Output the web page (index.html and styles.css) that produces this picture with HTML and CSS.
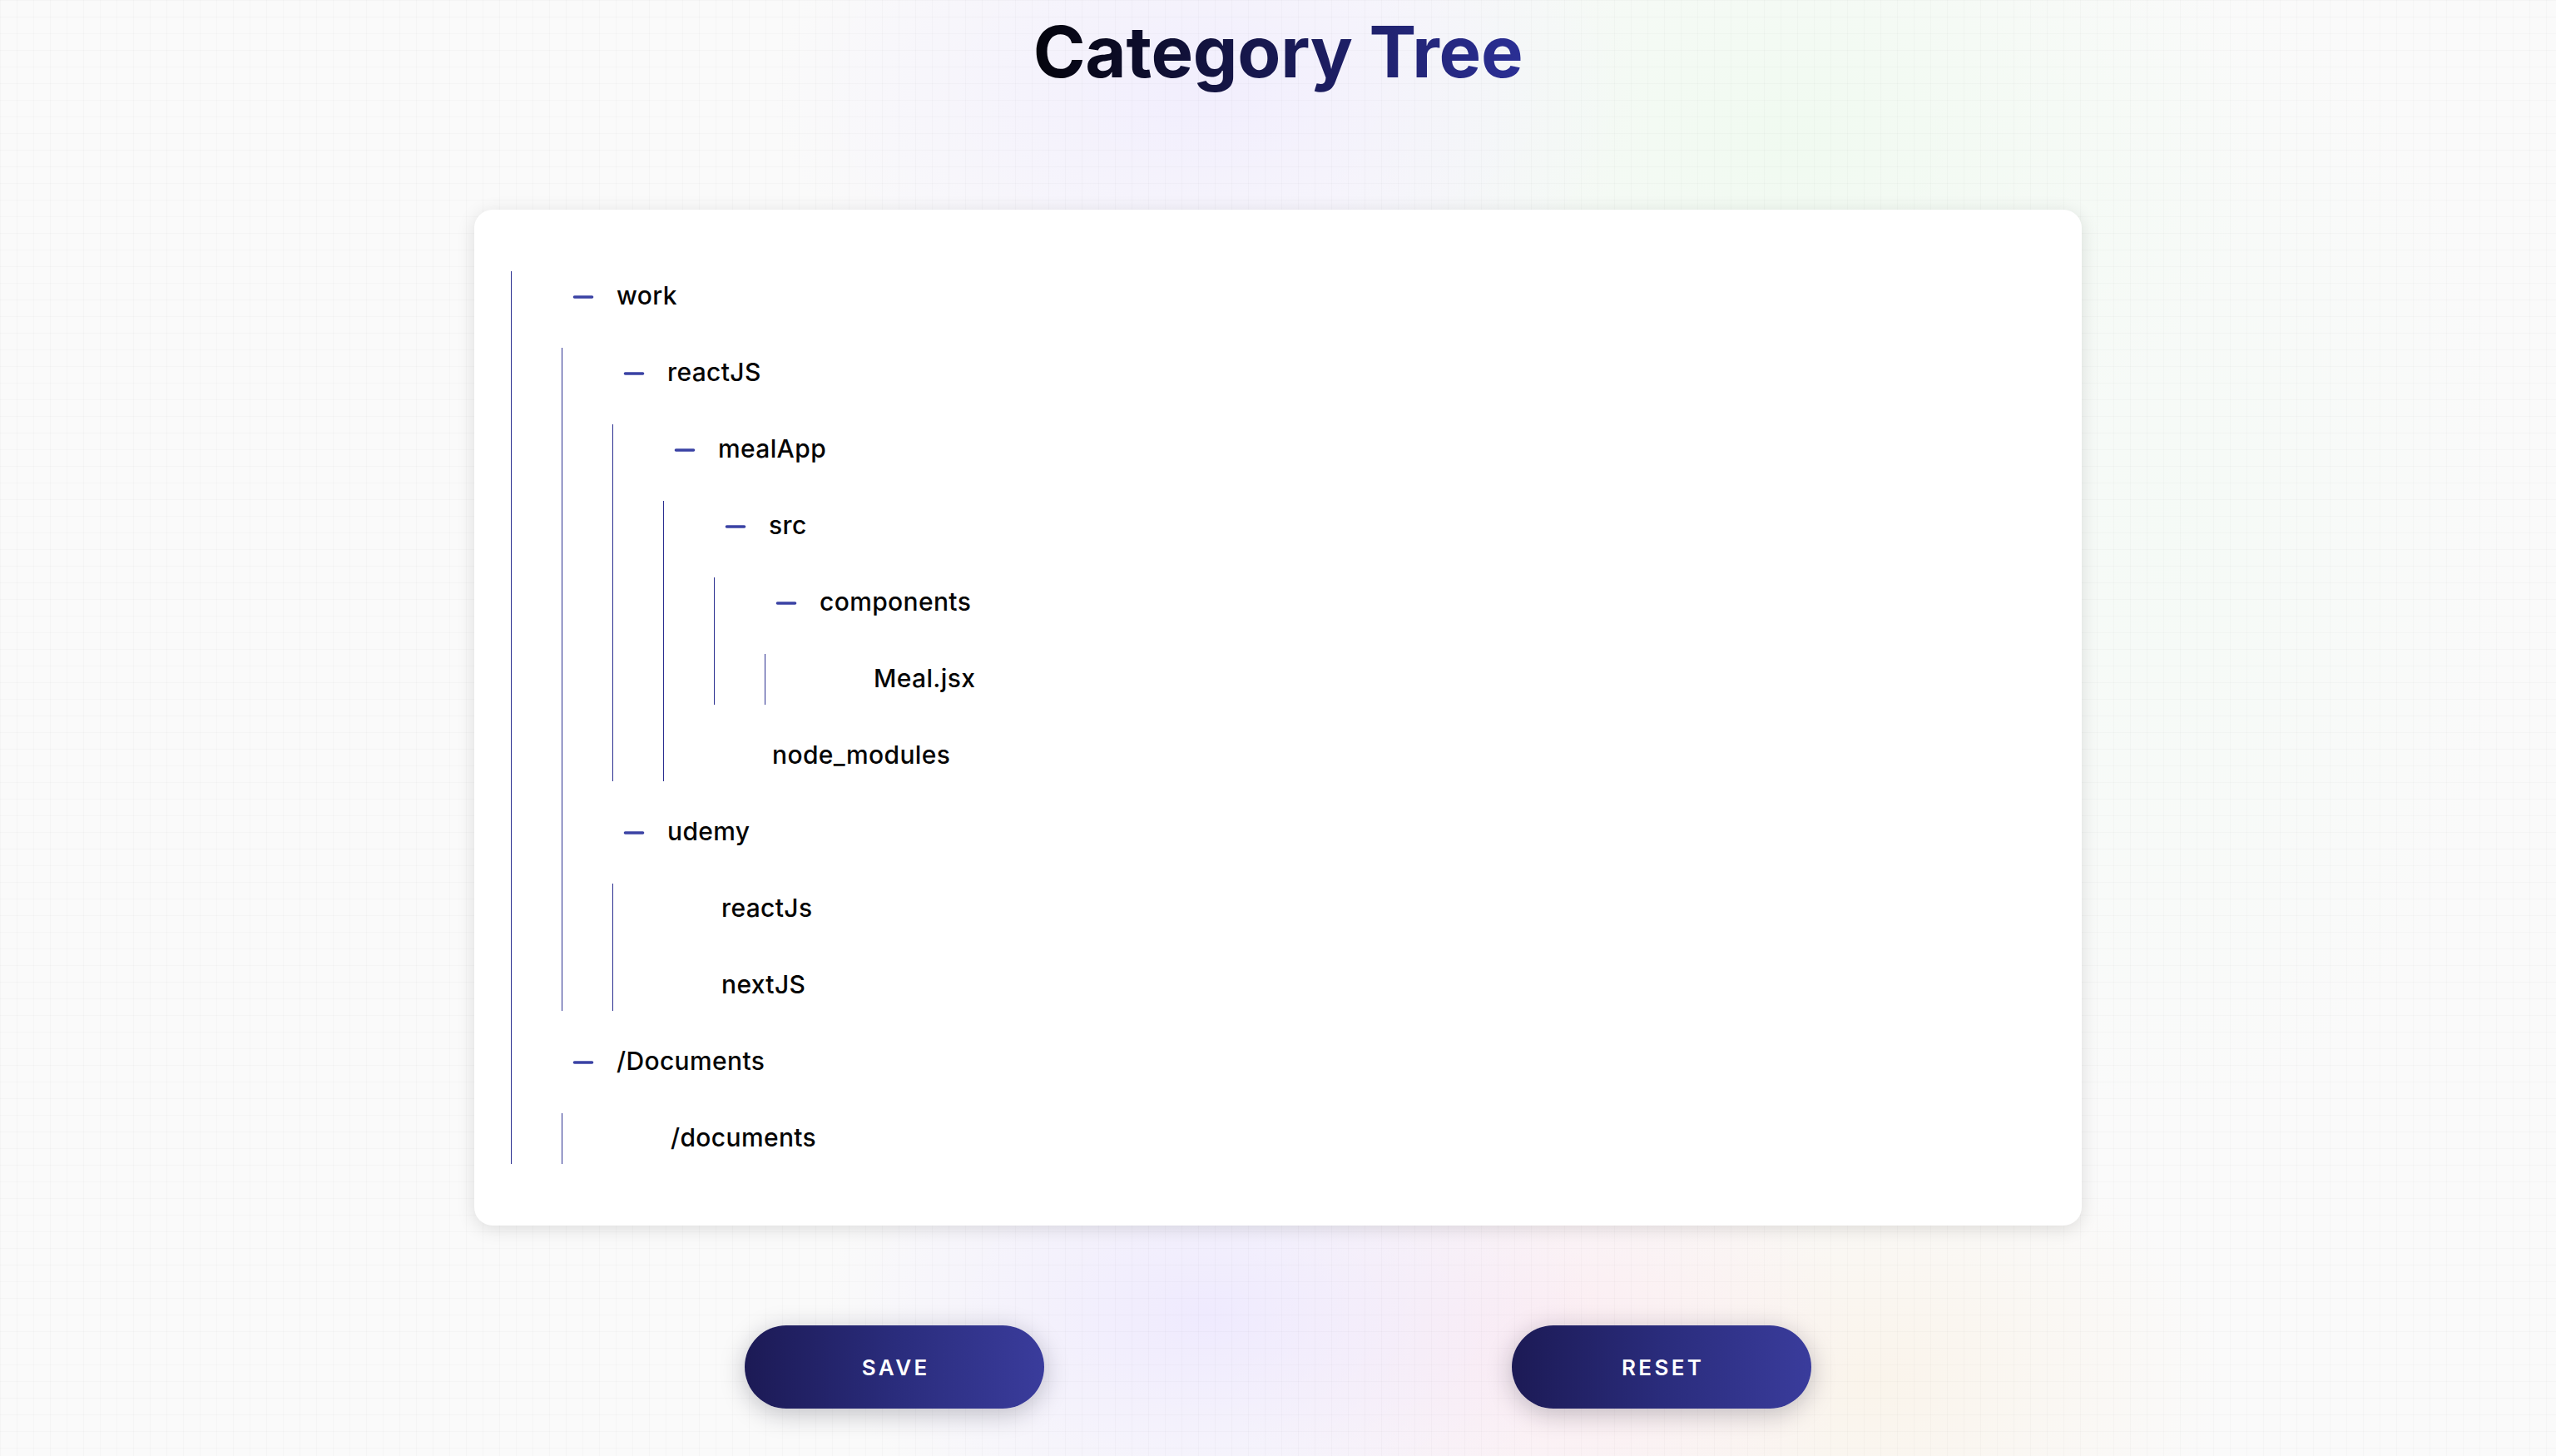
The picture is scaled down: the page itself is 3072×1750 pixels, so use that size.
FILE: index.html
```html
<!DOCTYPE html>
<html lang="en">
<head>
<meta charset="utf-8">
<title>Category Tree</title>
<link rel="stylesheet" href="styles.css">
</head>
<body>
<main class="page">
  <h1 class="title">Category Tree</h1>
  <section class="card">
    <ul class="tree">
      <li class="node">
        <div class="row"><span class="toggle"><svg viewBox="0 0 24 24"><path d="M5 12h14"/></svg></span><span class="label">work</span></div>
        <ul class="tree">
          <li class="node">
            <div class="row"><span class="toggle"><svg viewBox="0 0 24 24"><path d="M5 12h14"/></svg></span><span class="label">reactJS</span></div>
            <ul class="tree">
              <li class="node">
                <div class="row"><span class="toggle"><svg viewBox="0 0 24 24"><path d="M5 12h14"/></svg></span><span class="label">mealApp</span></div>
                <ul class="tree">
                  <li class="node">
                    <div class="row"><span class="toggle"><svg viewBox="0 0 24 24"><path d="M5 12h14"/></svg></span><span class="label">src</span></div>
                    <ul class="tree">
                      <li class="node">
                        <div class="row"><span class="toggle"><svg viewBox="0 0 24 24"><path d="M5 12h14"/></svg></span><span class="label">components</span></div>
                        <ul class="tree">
                          <li class="node">
                            <div class="row leaf"><span class="label">Meal.jsx</span></div>
                          </li>
                        </ul>
                      </li>
                    </ul>
                  </li>
                  <li class="node">
                    <div class="row leaf"><span class="label">node_modules</span></div>
                  </li>
                </ul>
              </li>
            </ul>
          </li>
          <li class="node">
            <div class="row"><span class="toggle"><svg viewBox="0 0 24 24"><path d="M5 12h14"/></svg></span><span class="label">udemy</span></div>
            <ul class="tree">
              <li class="node">
                <div class="row leaf"><span class="label">reactJs</span></div>
              </li>
              <li class="node">
                <div class="row leaf"><span class="label">nextJS</span></div>
              </li>
            </ul>
          </li>
        </ul>
      </li>
      <li class="node">
        <div class="row"><span class="toggle"><svg viewBox="0 0 24 24"><path d="M5 12h14"/></svg></span><span class="label">/Documents</span></div>
        <ul class="tree">
          <li class="node">
            <div class="row leaf"><span class="label">/documents</span></div>
          </li>
        </ul>
      </li>
    </ul>
  </section>
  <div class="actions">
    <button class="btn" type="button">SAVE</button>
    <button class="btn" type="button">RESET</button>
  </div>
</main>
</body>
</html>
```

FILE: styles.css
```css
html, body {
  margin: 0;
  padding: 0;
}

body {
  min-height: 100vh;
  font-family: Inter, "Noto Sans", "Liberation Sans", sans-serif;
  color: #000;
  background-color: #fafafa;
  background-image:
    linear-gradient(rgba(0, 0, 0, 0.02) 1px, transparent 1px),
    linear-gradient(90deg, rgba(0, 0, 0, 0.02) 1px, transparent 1px),
    radial-gradient(ellipse 520px 320px at 1450px 110px, rgba(238, 233, 255, 0.7), rgba(238, 233, 255, 0) 100%),
    radial-gradient(ellipse 560px 420px at 2150px 170px, rgba(232, 250, 232, 0.55), rgba(232, 250, 232, 0) 100%),
    radial-gradient(ellipse 420px 700px at 2600px 650px, rgba(240, 250, 242, 0.5), rgba(240, 250, 242, 0) 100%),
    radial-gradient(ellipse 460px 300px at 1450px 1580px, rgba(236, 230, 255, 0.8), rgba(236, 230, 255, 0) 100%),
    radial-gradient(ellipse 380px 280px at 1850px 1620px, rgba(252, 232, 240, 0.8), rgba(252, 232, 240, 0) 100%),
    radial-gradient(ellipse 420px 300px at 2250px 1660px, rgba(250, 242, 230, 0.75), rgba(250, 242, 230, 0) 100%);
  background-size: 20px 20px, 20px 20px, auto, auto, auto, auto, auto, auto;
}

.page {
  display: flex;
  flex-direction: column;
  align-items: center;
  padding-top: 12px;
  box-sizing: border-box;
}

.title {
  margin: 0;
  font-family: Inter, "Liberation Sans", sans-serif;
  font-size: 85px;
  font-weight: 700;
  line-height: 1.2;
  letter-spacing: -0.003em;
  background: linear-gradient(90deg, #04040c 0%, #17174d 45%, #2b2f95 100%);
  -webkit-background-clip: text;
  background-clip: text;
  color: transparent;
}

.card {
  margin-top: 138px;
  width: 1932px;
  box-sizing: border-box;
  padding: 74px 44px;
  background: #fff;
  border-radius: 22px;
  box-shadow: 0 4px 22px rgba(0, 0, 0, 0.12);
}

.tree {
  list-style: none;
  margin: 0;
  padding: 0 0 0 60px;
  border-left: 1px solid #2b2f90;
  display: flex;
  flex-direction: column;
  gap: 31px;
}

.node {
  display: flex;
  flex-direction: column;
  gap: 31px;
}

.row {
  height: 61px;
  display: flex;
  align-items: center;
  padding-left: 8px;
}

.toggle {
  width: 36px;
  height: 36px;
  flex: none;
  color: #3a42a4;
  margin-right: 22px;
}

.toggle svg {
  display: block;
  width: 36px;
  height: 36px;
  fill: none;
  stroke: currentColor;
  stroke-width: 2.4;
  stroke-linecap: round;
}

.label {
  font-size: 30px;
  font-weight: 500;
  line-height: 1;
  letter-spacing: 0.012em;
  padding-bottom: 3px;
  color: #050505;
  white-space: nowrap;
}

.row.leaf .label {
  margin-left: 62px;
}

.actions {
  margin-top: 120px;
  display: flex;
  gap: 562px;
}

.btn {
  width: 360px;
  height: 100px;
  border: none;
  border-radius: 50px;
  background: linear-gradient(90deg, #1c1a55 0%, #2a2c7c 50%, #3a3c9c 100%);
  color: #fff;
  font-family: Inter, "Liberation Sans", sans-serif;
  font-size: 26px;
  font-weight: 600;
  letter-spacing: 0.13em;
  padding: 0 0 0 0.13em;
  box-shadow: 0 6px 30px rgba(20, 20, 40, 0.25);
  cursor: pointer;
}
```
